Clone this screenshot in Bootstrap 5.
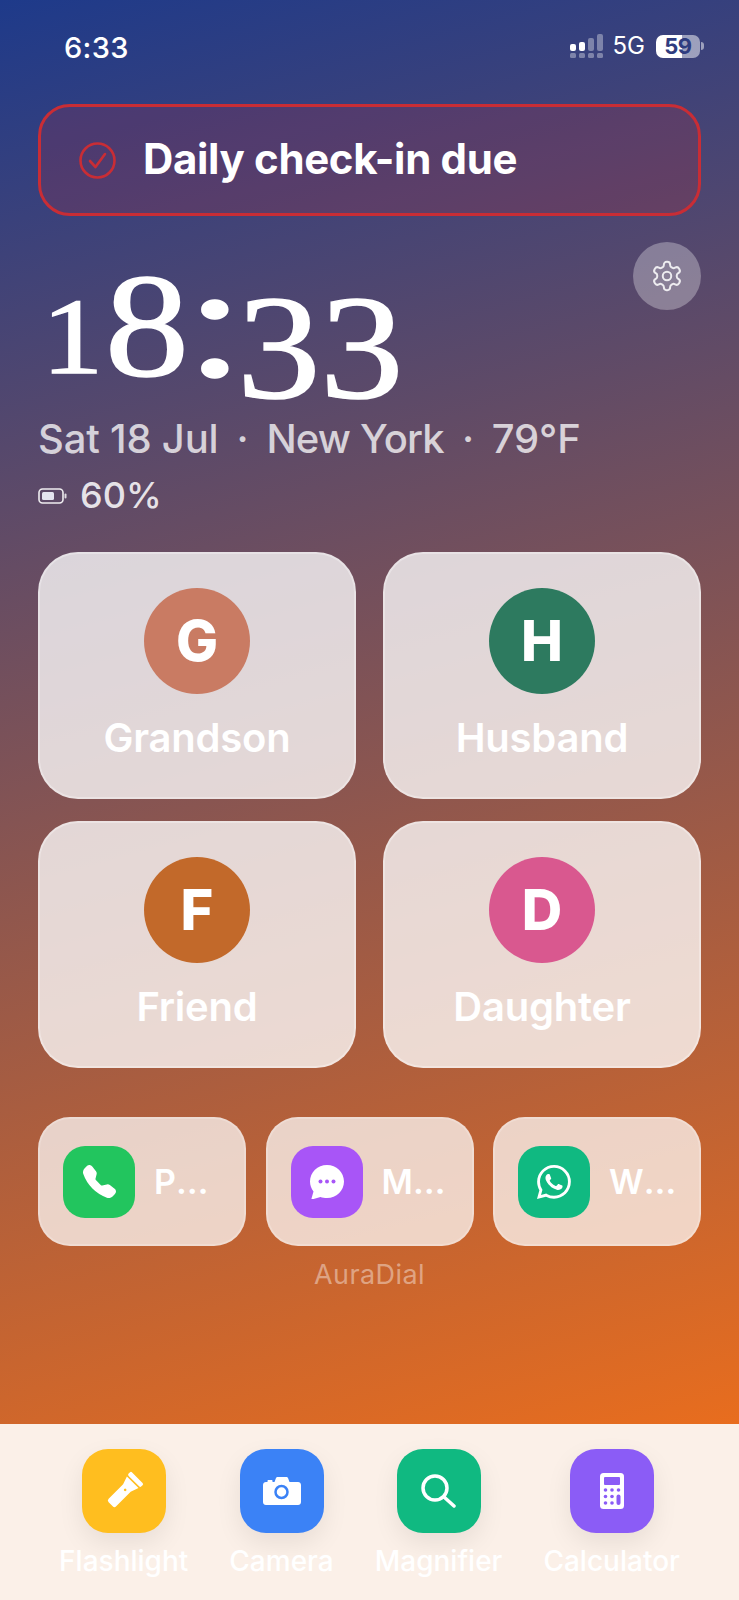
<!DOCTYPE html>
<html lang="en">
<head>
  <meta charset="UTF-8" />
  <meta name="viewport" content="width=device-width, initial-scale=1.0" />
  <title>AuraDial</title>
  <link href="https://cdn.jsdelivr.net/npm/bootstrap@5.3.0/dist/css/bootstrap.min.css" rel="stylesheet" />
  <style>
    html, body { height: 100%; }
    body { font-family: Inter, "Liberation Sans", sans-serif; background: #fbf0e8; color: #fff; }
    .screen { height: 1600px; overflow: hidden; }
    .home-area { height: 1424px; padding: 0 38px; background: linear-gradient(165deg, #1e3a8a 0%, #e86d1e 100%); }

    .status-bar { height: 104px; padding: 34px 0 0 26px; }
    .status-time { font-size: 29px; font-weight: 500; line-height: 28px; letter-spacing: .3px; }
    .status-net { font-size: 24px; line-height: 24px; margin: 0 11px 0 9px; }
    .status-batt { width: 44px; height: 23px; border-radius: 7px; font-size: 22px; font-weight: 700; line-height: 23px; color: #2f3c7f; text-align: center; letter-spacing: -.5px; }
    .status-nub { width: 3px; height: 8px; margin: 0 -3px 0 1px; border-radius: 0 3px 3px 0; background: rgba(255,255,255,.5); }

    .checkin-banner { height: 112px; padding-left: 38px; gap: 27px; border: 3px solid #c92d35; border-radius: 32px; background: rgba(220,38,38,.16); font-size: 42px; font-weight: 700; letter-spacing: -.35px; }
    .checkin-text { margin-top: -3px; }

    .clock-row { height: 174px; margin-top: 26px; }
    .clock-digits { font-family: "Liberation Serif", serif; font-size: 148px; line-height: 130px; -webkit-text-stroke: 1.5px #fff; }
    .clock-digits span { display: flex; justify-content: center; transform-origin: center; }
    .dg-one { width: 59px; font-size: 107px; line-height: 90px; margin: 50px 4.5px 0; transform: scaleX(1.15); }
    .dg-eight { width: 72px; margin: 19px 5px 0; transform: scaleX(1.14); }
    .dg-colon { width: 40px; font-size: 160px; line-height: 140px; margin: 10px 7px 0; transform: scaleX(1.35); }
    .dg-three-a { width: 65.5px; margin: 41px 4.25px 0; transform: scaleX(1.13); }
    .dg-three-b { width: 81.5px; margin: 41px 5.25px 0; transform: scaleX(1.13); }
    .gear-btn { width: 68px; height: 68px; background: rgba(255,255,255,.3); }

    .date-line { font-size: 40px; line-height: 46px; font-weight: 500; letter-spacing: -.2px; color: rgba(255,255,255,.75); margin-bottom: 12px; }
    .date-sep { margin: 0 18px; }
    .date-place { letter-spacing: -.8px; }
    .batt-line { font-size: 36px; line-height: 43px; font-weight: 500; color: rgba(255,255,255,.85); gap: 13px; margin-bottom: 35px; }

    .contact-grid { grid-template-columns: 318px 318px; column-gap: 27px; row-gap: 22px; }
    .contact-tile { height: 247px; padding-top: 34px; border: 2px solid rgba(255,255,255,.3); border-radius: 40px; background: rgba(255,255,255,.77); }
    .contact-avatar { width: 106px; height: 106px; font-size: 56px; font-weight: 800; }
    .contact-name { font-size: 40px; font-weight: 600; line-height: 48px; margin-top: 20px; letter-spacing: -.2px; }
    .av-grandson { background: #c97b63; }
    .av-husband { background: #2d7a5f; }
    .av-friend { background: #c2692a; }
    .av-daughter { background: #d9588f; }

    .app-row { grid-template-columns: repeat(3, 208px); column-gap: 19.5px; margin-top: 49px; }
    .app-tile { height: 129px; padding: 0 22px 0 23px; gap: 19px; border: 2px solid rgba(255,255,255,.2); border-radius: 32px; background: rgba(255,255,255,.72); }
    .app-icon { width: 72px; height: 72px; border-radius: 22px; flex-shrink: 0; }
    .app-label { font-size: 34px; font-weight: 600; min-width: 0; }
    .bg-phone { background: #22c55e; }
    .bg-msg { background: #a855f7; }
    .bg-wa { background: #10b981; }
    .brand-line { font-size: 27px; line-height: 32px; margin-top: 13px; color: rgba(255,255,255,.42); letter-spacing: .4px; }

    .dock { height: 176px; padding-top: 25px; gap: 41px; background: #fbf0e8; }
    .dock-icon { width: 84px; height: 84px; border-radius: 26px; box-shadow: 0 10px 26px rgba(0,0,0,.08); }
    .dock-label { font-size: 28px; line-height: 32px; margin-top: 12px; font-weight: 500; }
    .bg-flash { background: #ffbe1f; }
    .bg-cam { background: #3b82f6; }
    .bg-mag { background: #10b981; }
    .bg-calc { background: #8b5cf6; }
  </style>
</head>
<body>
  <div class="screen d-flex flex-column">
    <div class="home-area">
      <!-- Status bar -->
      <div class="status-bar d-flex justify-content-between align-items-start">
        <div class="status-time">6:33</div>
        <div class="d-flex align-items-center">
          <svg width="34" height="24" viewBox="0 0 34 24" fill="#fff">
            <rect x="0" y="10" width="6" height="7" rx="2"/>
            <rect x="9" y="8" width="6" height="9" rx="2"/>
            <g opacity=".35">
              <rect x="18" y="4" width="6" height="13" rx="2"/>
              <rect x="27" y="0" width="6" height="17" rx="2"/>
              <rect x="0" y="19" width="6" height="5" rx="1.5"/>
              <rect x="9" y="19" width="6" height="5" rx="1.5"/>
              <rect x="18" y="19" width="6" height="5" rx="1.5"/>
              <rect x="27" y="19" width="6" height="5" rx="1.5"/>
            </g>
          </svg>
          <span class="status-net">5G</span>
          <span class="status-batt" style="background: linear-gradient(90deg, #fff 59%, rgba(255,255,255,.5) 59%)">59</span>
          <span class="status-nub"></span>
        </div>
      </div>

      <!-- Check-in -->
      <div class="checkin-banner d-flex align-items-center">
        <svg width="37" height="37" viewBox="0 0 37 37" fill="none" stroke="#c92d35" stroke-width="2.6" stroke-linecap="round" stroke-linejoin="round">
          <circle cx="18.5" cy="18.5" r="17"/>
          <path d="M11 19l5.5 6L26 12"/>
        </svg>
        <span class="checkin-text">Daily check-in due</span>
      </div>

      <!-- Clock -->
      <div class="clock-row d-flex justify-content-between align-items-start">
        <div class="clock-digits d-flex align-items-start">
          <span class="dg-one">1</span><span class="dg-eight">8</span><span class="dg-colon">:</span><span class="dg-three-a">3</span><span class="dg-three-b">3</span>
        </div>
        <div class="gear-btn rounded-circle d-flex align-items-center justify-content-center">
          <svg width="34" height="34" viewBox="0 0 24 24" fill="none" stroke="#fff" stroke-opacity=".85" stroke-width="1.4" stroke-linecap="round" stroke-linejoin="round">
            <path d="M12.22 2h-.44a2 2 0 0 0-2 2v.18a2 2 0 0 1-1 1.73l-.43.25a2 2 0 0 1-2 0l-.15-.08a2 2 0 0 0-2.73.73l-.22.38a2 2 0 0 0 .73 2.73l.15.1a2 2 0 0 1 1 1.72v.51a2 2 0 0 1-1 1.74l-.15.09a2 2 0 0 0-.73 2.73l.22.38a2 2 0 0 0 2.73.73l.15-.08a2 2 0 0 1 2 0l.43.25a2 2 0 0 1 1 1.73V20a2 2 0 0 0 2 2h.44a2 2 0 0 0 2-2v-.18a2 2 0 0 1 1-1.73l.43-.25a2 2 0 0 1 2 0l.15.08a2 2 0 0 0 2.73-.73l.22-.39a2 2 0 0 0-.73-2.73l-.15-.08a2 2 0 0 1-1-1.74v-.5a2 2 0 0 1 1-1.74l.15-.09a2 2 0 0 0 .73-2.73l-.22-.38a2 2 0 0 0-2.73-.73l-.15.08a2 2 0 0 1-2 0l-.43-.25a2 2 0 0 1-1-1.73V4a2 2 0 0 0-2-2z"/>
            <circle cx="12" cy="12" r="3"/>
          </svg>
        </div>
      </div>

      <div class="date-line text-nowrap">Sat 18 Jul<span class="date-sep">·</span><span class="date-place">New York</span><span class="date-sep">·</span>79°F</div>
      <div class="batt-line d-flex align-items-center">
        <svg width="29" height="16" viewBox="0 0 29 16">
          <rect x="1" y="1" width="24" height="14" rx="3.5" fill="none" stroke="#fff" stroke-opacity=".9" stroke-width="1.6"/>
          <rect x="4" y="4" width="12" height="8" rx="1.5" fill="#e5e5f0"/>
          <rect x="26.5" y="5.5" width="2" height="5" rx="1" fill="#fff" fill-opacity=".8"/>
        </svg>
        <span>60%</span>
      </div>

      <!-- Contacts -->
      <div class="contact-grid d-grid">
        <div class="contact-tile d-flex flex-column align-items-center">
          <div class="contact-avatar av-grandson rounded-circle d-flex align-items-center justify-content-center">G</div>
          <div class="contact-name">Grandson</div>
        </div>
        <div class="contact-tile d-flex flex-column align-items-center">
          <div class="contact-avatar av-husband rounded-circle d-flex align-items-center justify-content-center">H</div>
          <div class="contact-name">Husband</div>
        </div>
        <div class="contact-tile d-flex flex-column align-items-center">
          <div class="contact-avatar av-friend rounded-circle d-flex align-items-center justify-content-center">F</div>
          <div class="contact-name">Friend</div>
        </div>
        <div class="contact-tile d-flex flex-column align-items-center">
          <div class="contact-avatar av-daughter rounded-circle d-flex align-items-center justify-content-center">D</div>
          <div class="contact-name">Daughter</div>
        </div>
      </div>

      <!-- Apps -->
      <div class="app-row d-grid">
        <div class="app-tile d-flex align-items-center">
          <div class="app-icon bg-phone d-flex align-items-center justify-content-center">
            <svg width="33" height="33" viewBox="0 0 16 16" fill="#fff"><path d="M1.885.511a1.745 1.745 0 0 1 2.61.163L6.29 2.98c.329.423.445.974.315 1.494l-.547 2.19a.678.678 0 0 0 .178.643l2.457 2.457a.678.678 0 0 0 .644.178l2.189-.547a1.745 1.745 0 0 1 1.494.315l2.306 1.794c.829.645.905 1.87.163 2.611l-1.034 1.034c-.74.74-1.846 1.065-2.877.702a18.634 18.634 0 0 1-7.01-4.42 18.634 18.634 0 0 1-4.42-7.009c-.362-1.03-.037-2.137.703-2.877L1.885.511z"/></svg>
          </div>
          <div class="app-label text-truncate">Phone</div>
        </div>
        <div class="app-tile d-flex align-items-center">
          <div class="app-icon bg-msg d-flex align-items-center justify-content-center">
            <svg width="34" height="34" viewBox="0 0 34 34">
              <path fill="#fff" d="M17 0C7.6 0 0 7.4 0 16.5c0 3.800 1.300 7.200 3.500 10L1.500 33.500c-.2.700.3 1 1 .8l8-2.300C12.400 32.800 14.700 33 17 33c9.400 0 17-7.400 17-16.500S26.400 0 17 0z"/>
              <circle cx="10.500" cy="16.500" r="2" fill="#a855f7"/><circle cx="17" cy="16.500" r="2" fill="#a855f7"/><circle cx="23.500" cy="16.500" r="2" fill="#a855f7"/>
            </svg>
          </div>
          <div class="app-label text-truncate">Messages</div>
        </div>
        <div class="app-tile d-flex align-items-center">
          <div class="app-icon bg-wa d-flex align-items-center justify-content-center">
            <svg width="34" height="34" viewBox="0 0 16 16" fill="#fff"><path d="M13.601 2.326A7.854 7.854 0 0 0 7.994 0C3.627 0 .068 3.558.064 7.926c0 1.399.366 2.76 1.057 3.965L0 16l4.204-1.102a7.933 7.933 0 0 0 3.79.965h.004c4.368 0 7.926-3.558 7.93-7.93A7.898 7.898 0 0 0 13.6 2.326zM7.994 14.521a6.573 6.573 0 0 1-3.356-.92l-.24-.144-2.494.654.666-2.433-.156-.251a6.56 6.56 0 0 1-1.007-3.505c0-3.626 2.957-6.584 6.591-6.584a6.56 6.56 0 0 1 4.66 1.931 6.557 6.557 0 0 1 1.928 4.66c-.004 3.639-2.961 6.592-6.592 6.592zm3.615-4.934c-.197-.099-1.17-.578-1.353-.646-.182-.065-.315-.099-.445.099-.133.197-.513.646-.627.775-.114.133-.232.148-.43.05-.197-.1-.836-.308-1.592-.985-.59-.525-.985-1.175-1.103-1.372-.114-.198-.011-.304.088-.403.087-.088.197-.232.296-.346.1-.114.133-.198.198-.33.065-.134.034-.248-.015-.347-.05-.099-.445-1.076-.612-1.47-.16-.389-.323-.335-.445-.34-.114-.007-.247-.007-.38-.007a.729.729 0 0 0-.529.247c-.182.198-.691.677-.691 1.654 0 .977.71 1.916.81 2.049.098.133 1.394 2.132 3.383 2.992.47.205.84.326 1.129.418.475.152.904.129 1.246.08.38-.058 1.171-.48 1.338-.943.164-.464.164-.86.114-.943-.049-.084-.182-.133-.38-.232z"/></svg>
          </div>
          <div class="app-label text-truncate">WhatsApp</div>
        </div>
      </div>
      <div class="brand-line text-center">AuraDial</div>
    </div>

    <!-- Dock -->
    <div class="dock d-flex justify-content-center">
      <div class="d-flex flex-column align-items-center">
        <div class="dock-icon bg-flash d-flex align-items-center justify-content-center">
          <svg width="40" height="40" viewBox="0 0 40 40" fill="#fff">
            <g transform="translate(20 20) rotate(45) scale(.82)">
              <rect x="-11" y="-23" width="22" height="6" rx="2"/>
              <path d="M-10-15h20l-3.500 10v25a3 3 0 0 1-3 3h-7a3 3 0 0 1-3-3V-5z"/>
              <circle cx="0" cy="-2" r="1.600" fill="#ffbe1f"/>
            </g>
          </svg>
        </div>
        <div class="dock-label">Flashlight</div>
      </div>
      <div class="d-flex flex-column align-items-center">
        <div class="dock-icon bg-cam d-flex align-items-center justify-content-center">
          <svg width="38" height="28" viewBox="0 0 38 28">
            <path fill="#fff" d="M3 5h1.500V4c0-.6.4-1 1-1h3c.6 0 1 .4 1 1v1h2L13 1c.3-.6.8-1 1.500-1h9c.7 0 1.200.4 1.500 1l1.500 4H35c1.700 0 3 1.300 3 3v17c0 1.700-1.300 3-3 3H3c-1.700 0-3-1.300-3-3V8c0-1.700 1.300-3 3-3z"/>
            <circle cx="18.500" cy="15" r="6" fill="none" stroke="#3b82f6" stroke-width="2.500"/>
          </svg>
        </div>
        <div class="dock-label">Camera</div>
      </div>
      <div class="d-flex flex-column align-items-center">
        <div class="dock-icon bg-mag d-flex align-items-center justify-content-center">
          <svg width="35" height="34" viewBox="0 0 35 34" fill="none" stroke="#fff" stroke-width="3.500" stroke-linecap="round">
            <circle cx="14" cy="14" r="12"/>
            <path d="M23 23l10 9"/>
          </svg>
        </div>
        <div class="dock-label">Magnifier</div>
      </div>
      <div class="d-flex flex-column align-items-center">
        <div class="dock-icon bg-calc d-flex align-items-center justify-content-center">
          <svg width="24" height="36" viewBox="0 0 24 36">
            <rect width="24" height="36" rx="3.500" fill="#fff"/>
            <g fill="#8b5cf6">
              <rect x="4" y="4" width="16" height="8" rx="1"/>
              <circle cx="5.500" cy="17" r="1.800"/><circle cx="12" cy="17" r="1.800"/><circle cx="18.500" cy="17" r="1.800"/>
              <circle cx="5.500" cy="23.500" r="1.800"/><circle cx="12" cy="23.500" r="1.800"/>
              <circle cx="5.500" cy="30" r="1.800"/><circle cx="12" cy="30" r="1.800"/>
              <rect x="16.500" y="21.500" width="4" height="10.500" rx="2"/>
            </g>
          </svg>
        </div>
        <div class="dock-label">Calculator</div>
      </div>
    </div>
  </div>
  <script src="https://cdn.jsdelivr.net/npm/bootstrap@5.3.0/dist/js/bootstrap.bundle.min.js"></script>
</body>
</html>
